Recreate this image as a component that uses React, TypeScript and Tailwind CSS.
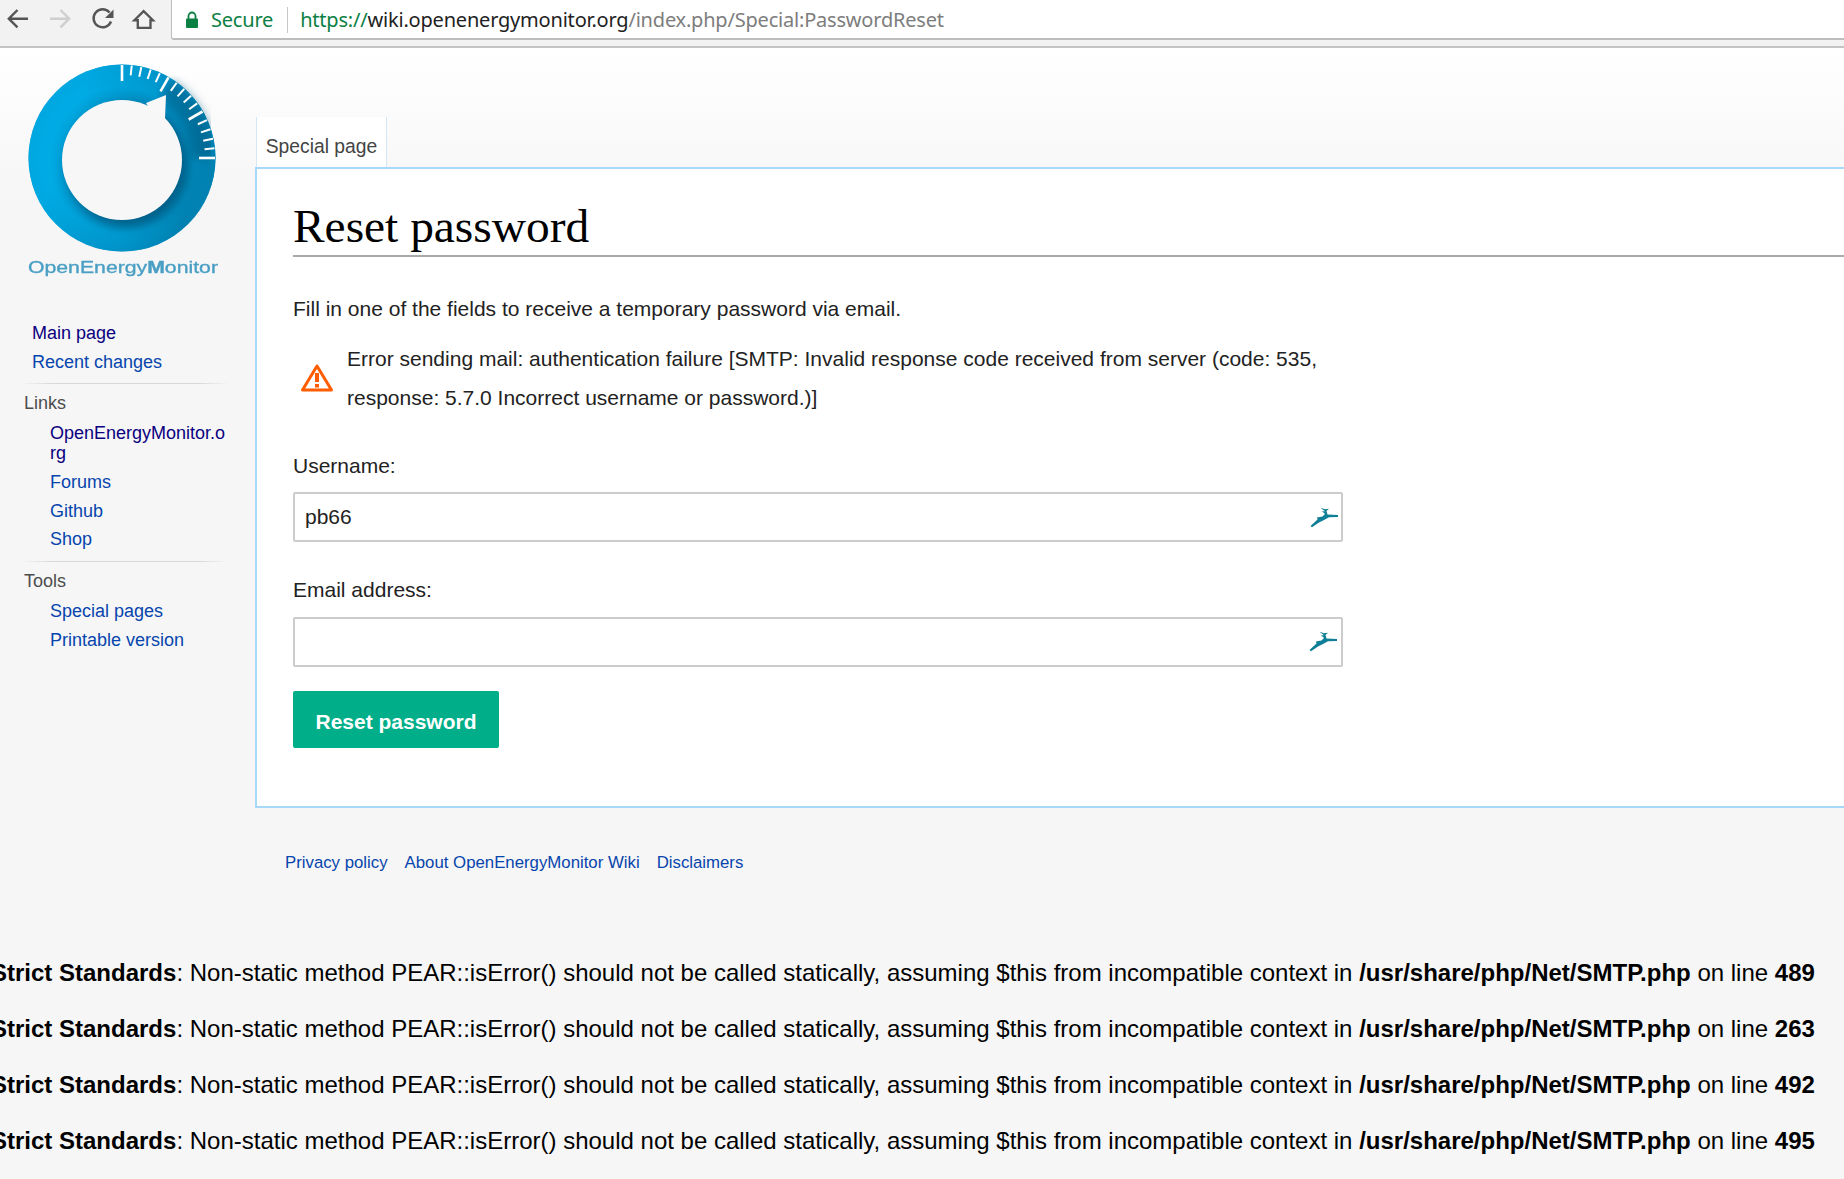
const arial = "font-['Liberation_Sans',Arial,sans-serif]";

function Deer({ className }: { className?: string }) {
  return (
    <svg viewBox="5 4 29 21" className={className} aria-hidden="true">
      <path
        d="M5.5 23 L12.5 16.5 L12 14.5 L17.5 13.5 L20 11 L18.5 9.5 L16.5 8.5 L20 8.2 L15.5 4.8 L20 6.2 L24 5.8 L21.5 8 L22.5 11.5 L33 12 L33 14 L24 14.3 L19.5 16.8 L14 19.5 L7 24.2 Z"
        fill="#0f7f97"
      />
    </svg>
  );
}

function NavIcons() {
  return (
    <div className="flex h-[39px] w-[171px] shrink-0">
      <svg viewBox="0 0 43 39" className="h-[39px] w-[43px]" fill="none" stroke="#555" strokeWidth="2.4" aria-hidden="true">
        <path d="M28 18.7 H9 M17.5 10 L8.8 18.7 L17.5 27.4" />
      </svg>
      <svg viewBox="0 0 43 39" className="h-[39px] w-[43px]" fill="none" stroke="#cfcfcf" strokeWidth="2.4" aria-hidden="true">
        <path d="M7 18.7 H26 M17.5 10 L26.2 18.7 L17.5 27.4" />
      </svg>
      <svg viewBox="0 0 43 39" className="h-[39px] w-[43px]" fill="none" aria-hidden="true">
        <path d="M23.5 12.5 A9 9 0 1 0 25 21.5" stroke="#555" strokeWidth="2.4" />
        <path d="M27.5 9.5 V18 H19 Z" fill="#555" />
      </svg>
      <svg viewBox="0 0 43 39" className="h-[39px] w-[42px]" fill="none" stroke="#555" strokeWidth="2.4" strokeLinejoin="miter" aria-hidden="true">
        <path d="M15 11 L5.5 20.3 H9 V28 H22 V20.3 H24.5 Z" />
      </svg>
    </div>
  );
}

function Logo() {
  const ticks = Array.from({ length: 16 }, (_, i) => i);
  return (
    <svg viewBox="0 0 255 230" className="mt-[2px] h-[230px] w-[255px]" aria-label="OpenEnergyMonitor logo">
      <defs>
        <radialGradient id="ring" cx="122" cy="160" r="94" gradientUnits="userSpaceOnUse">
          <stop offset="0.62" stopColor="#006f9e" />
          <stop offset="0.78" stopColor="#00a4dc" />
          <stop offset="1" stopColor="#0092c9" />
        </radialGradient>
        <linearGradient id="tone" x1="0" y1="0" x2="1" y2="0.35">
          <stop offset="0.3" stopColor="#00aee8" stopOpacity="0.75" />
          <stop offset="0.72" stopColor="#0090c4" stopOpacity="0.55" />
          <stop offset="1" stopColor="#007fae" stopOpacity="0.9" />
        </linearGradient>
        <filter id="soft" x="-10%" y="-10%" width="120%" height="120%">
          <feGaussianBlur stdDeviation="0.7" />
        </filter>
        <filter id="shade" x="-20%" y="-20%" width="140%" height="140%">
          <feGaussianBlur stdDeviation="5" />
        </filter>
      </defs>
      <g transform="translate(0,-50)">
        <g filter="url(#soft)">
          <circle cx="122" cy="158" r="93.5" fill="url(#ring)" />
          <circle cx="122" cy="158" r="93.5" fill="url(#tone)" />
          <path
            d="M165 90 A81 81 0 0 1 203 158"
            fill="none"
            stroke="#00567d"
            strokeOpacity="0.55"
            strokeWidth="24"
            filter="url(#shade)"
          />
          <circle cx="127" cy="166" r="61" fill="#004f73" opacity="0.65" filter="url(#shade)" />
          {ticks.map((i) => {
            const a = (i * 90) / 15;
            const long = i % 5 === 0;
            const inner = long ? 77 : 83;
            return (
              <line
                key={i}
                x1="122"
                y1={158 - inner}
                x2="122"
                y2={158 - 93}
                stroke="#fff"
                strokeWidth={long ? 2.6 : 2}
                transform={`rotate(${a} 122 158)`}
              />
            );
          })}
          <circle cx="122" cy="160" r="60" fill="#f7f7f7" />
          <path d="M146 103 L166 95 L165 119 L150 110 Z" fill="#f8f8f8" />
        </g>
        <text
          x="28"
          y="273"
          textLength="190"
          lengthAdjust="spacingAndGlyphs"
          fill="#4a9fc4"
          stroke="#4a9fc4"
          strokeWidth="0.35"
          fontSize="17"
          fontFamily="'Liberation Sans', Arial, sans-serif"
          filter="url(#soft)"
        >
          OpenEnergy<tspan fontWeight="700">M</tspan>onitor
        </text>
      </g>
    </svg>
  );
}

function NavLink({ label, visited = false, nested = false }: { label: string; visited?: boolean; nested?: boolean }) {
  return (
    <li className={`${nested ? "pl-[50px]" : "pl-[32px]"} pr-[26px] py-[4.4px] leading-[20px] break-all ${visited ? "text-[#0b0080]" : "text-[#0645ad]"}`}>
      {label}
    </li>
  );
}

function Divider({ className }: { className: string }) {
  return <div className={`ml-[20px] mr-[25px] h-px bg-[linear-gradient(to_right,transparent,#d8d8d8_15%,#d8d8d8_85%,transparent)] ${className}`} />;
}

function Field({ label, value, deerClass }: { label: string; value?: string; deerClass?: string }) {
  return (
    <div className="w-[1050px]">
      <div className="mb-[13.6px] text-[21px] leading-[27px] text-[#222]">{label}</div>
      <div className="flex h-[50px] items-center justify-between rounded-[2px] border-2 border-[#ccc] bg-white pl-[10px] pr-[2px]">
        <span className="text-[21px] text-[#222]">{value}</span>
        <Deer className={`h-[21px] w-[29px] ${deerClass ?? ""}`} />
      </div>
    </div>
  );
}

const notices = ["489", "263", "492", "495"];

export default function App() {
  return (
    <div className={`h-[1179px] w-[1844px] overflow-hidden bg-[#f6f6f6] ${arial}`}>
      <header className="flex h-[48px] items-start border-b-2 border-[#c4c4c4] bg-[#f2f2f2]">
        <NavIcons />
        <div className="flex h-[40px] flex-1 items-center rounded-bl-[3px] border-b-2 border-l border-[#bdbdbd] bg-white pt-[2px] font-['Noto_Sans',sans-serif] text-[20px] tracking-[-0.2px]">
          <svg viewBox="0 0 14 18" className="ml-[13px] h-[18px] w-[14px] shrink-0" aria-hidden="true">
            <path d="M3.5 8 V5 A3.5 3.5 0 0 1 10.5 5 V8" fill="none" stroke="#0b8043" strokeWidth="1.8" />
            <rect x="1" y="7.5" width="12" height="9.5" rx="1" fill="#0b8043" />
          </svg>
          <span className="ml-[12px] text-[#0b8043]">Secure</span>
          <span className="ml-[14px] mr-[12px] h-[26px] w-px bg-[#c8c8c8]" />
          <span className="text-[#0b8043]">https://</span>
          <span className="text-[#222]">wiki.openenergymonitor.org</span>
          <span className="text-[#7d7d7d]">/index.php/Special:PasswordReset</span>
        </div>
      </header>

      <div className="flex bg-[linear-gradient(#ffffff_0px,#f6f6f6_150px)]">
        <aside className="w-[255px] shrink-0 text-[18px]">
          <Logo />
          <ul className="mt-[39px]">
            <NavLink label="Main page" visited />
            <NavLink label="Recent changes" />
          </ul>
          <Divider className="mt-[6px]" />
          <div className="pl-[24px] pt-[8px] pb-[5px] leading-[22px] text-[#4d4d4d]">Links</div>
          <ul>
            <NavLink label="OpenEnergyMonitor.org" visited nested />
            <NavLink label="Forums" nested />
            <NavLink label="Github" nested />
            <NavLink label="Shop" nested />
          </ul>
          <Divider className="mt-[7px]" />
          <div className="pl-[24px] pt-[8px] pb-[5px] leading-[22px] text-[#4d4d4d]">Tools</div>
          <ul>
            <NavLink label="Special pages" nested />
            <NavLink label="Printable version" nested />
          </ul>
        </aside>

        <main className="min-w-0 flex-1">
          <div className="ml-px mt-[69px] flex h-[50px] w-[131px] items-center justify-center border-x border-[#d5e6f5] bg-white pt-[10px] text-[19.3px] text-[#444]">
            Special page
          </div>
          <div className="h-[641px] border-y-2 border-l-2 border-[#a7d7f9] bg-white pl-[36px]">
            <h1 className="mt-[29px] border-b-2 border-[#aaa] pb-[1px] font-['Liberation_Serif',serif] text-[47.4px] leading-[56px] text-black">
              Reset password
            </h1>
            <p className="mt-[38px] text-[21px] leading-[27px] text-[#222]">
              Fill in one of the fields to receive a temporary password via email.
            </p>
            <div className="mt-[17px] flex w-[1050px] items-center">
              <svg viewBox="0 0 34 30" className="ml-[7px] h-[30px] w-[34px] shrink-0" aria-hidden="true">
                <path d="M17 3 L31.5 27 L2.5 27 Z" fill="none" stroke="#ff5d00" strokeWidth="3" strokeLinejoin="round" />
                <rect x="15" y="10" width="4" height="9" fill="#ff5d00" />
                <rect x="15" y="21" width="4" height="3.5" fill="#ff5d00" />
              </svg>
              <div className="ml-[13px] text-[21px] leading-[39px] text-[#222]">
                Error sending mail: authentication failure [SMTP: Invalid response code received from server (code: 535, response: 5.7.0 Incorrect username or password.)]
              </div>
            </div>
            <div className="mt-[34.6px] flex flex-col gap-[34.2px]">
              <Field label="Username:" value="pb66" />
              <Field label="Email address:" deerClass="mr-[1px]" />
            </div>
            <button
              type="button"
              className="mt-[24px] h-[57px] w-[206px] rounded-[2px] bg-[#00af89] pt-[5px] text-[21px] font-bold text-white"
            >
              Reset password
            </button>
          </div>
        </main>
      </div>

      <footer className="mt-[43px] flex gap-[17px] pl-[285px] text-[16.8px] leading-[24px] text-[#0645ad]">
        <span>Privacy policy</span>
        <span>About OpenEnergyMonitor Wiki</span>
        <span>Disclaimers</span>
      </footer>

      <div className="mt-[84px] ml-[-9px] whitespace-nowrap text-[24px] leading-[28px] text-black">
        {notices.map((line) => (
          <p key={line} className="mb-[28px]">
            <b>Strict Standards</b>: Non-static method PEAR::isError() should not be called statically, assuming $this from incompatible context in <b>/usr/share/php/Net/SMTP.php</b> on line <b>{line}</b>
          </p>
        ))}
      </div>
    </div>
  );
}
